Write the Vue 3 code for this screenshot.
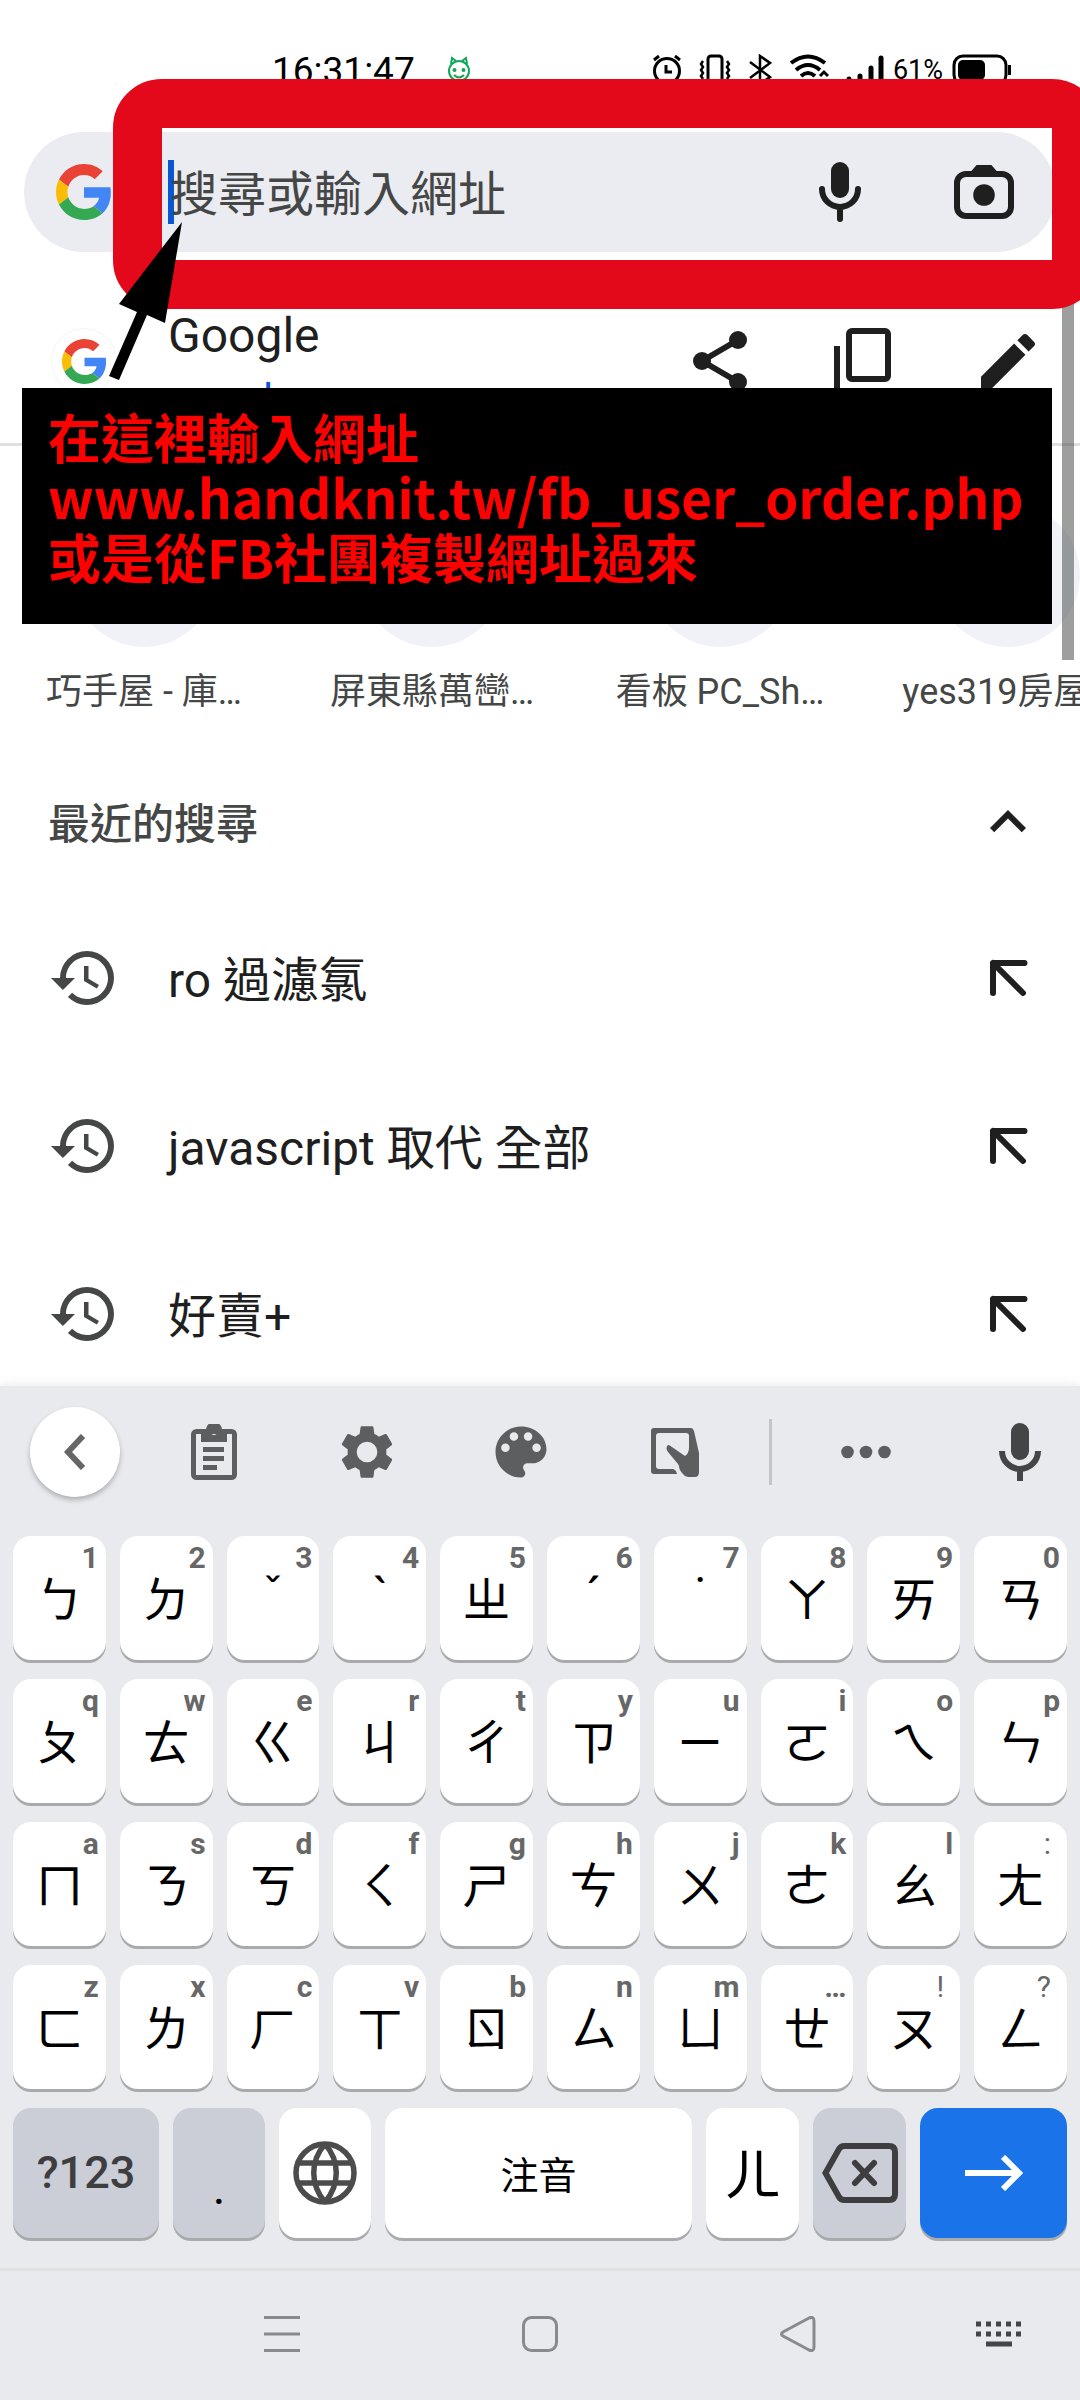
<script setup>
const tiles = ['巧手屋 - 庫…', '屏東縣萬巒…', '看板 PC_Sh…', 'yes319房屋…']

const searches = ['ro 過濾氯', 'javascript 取代 全部', '好賣+']

const keyRows = [
  [['ㄅ', '1'], ['ㄉ', '2'], ['ˇ', '3'], ['ˋ', '4'], ['ㄓ', '5'], ['ˊ', '6'], ['˙', '7'], ['ㄚ', '8'], ['ㄞ', '9'], ['ㄢ', '0']],
  [['ㄆ', 'q'], ['ㄊ', 'w'], ['ㄍ', 'e'], ['ㄐ', 'r'], ['ㄔ', 't'], ['ㄗ', 'y'], ['ㄧ', 'u'], ['ㄛ', 'i'], ['ㄟ', 'o'], ['ㄣ', 'p']],
  [['ㄇ', 'a'], ['ㄋ', 's'], ['ㄎ', 'd'], ['ㄑ', 'f'], ['ㄕ', 'g'], ['ㄘ', 'h'], ['ㄨ', 'j'], ['ㄜ', 'k'], ['ㄠ', 'l'], ['ㄤ', ':']],
  [['ㄈ', 'z'], ['ㄌ', 'x'], ['ㄏ', 'c'], ['ㄒ', 'v'], ['ㄖ', 'b'], ['ㄙ', 'n'], ['ㄩ', 'm'], ['ㄝ', '…'], ['ㄡ', '!'], ['ㄥ', '?']],
]

const isPunctuation = (hint) => [':', '!', '?'].includes(hint)
const isTone = (glyph) => ['ˇ', 'ˋ', 'ˊ', '˙'].includes(glyph)
</script>

<template>
  <div class="screen">
    <header class="status">
      <span class="clock">16:31:47</span>
      <svg class="face" width="24" height="28" viewBox="0 0 24 28" fill="none" stroke="#10a858" stroke-width="2">
        <circle cx="12" cy="15" r="10" />
        <path d="M4 8l1-6 4 3M20 8l-1-6-4 3M7 19q5 5 10 0" />
        <circle cx="7.500" cy="14" r="1" fill="#10a858" /><circle cx="16.500" cy="14" r="1" fill="#10a858" />
      </svg>
      <div class="indicators">
        <svg width="30" height="32" viewBox="0 0 30 32" fill="none" stroke="#000" stroke-width="3">
          <circle cx="15" cy="17" r="12.500" /><path d="M14 11v7h6M2 6l5-4M28 6l-5-4" />
        </svg>
        <svg width="32" height="32" viewBox="0 0 32 32" fill="none" stroke="#000" stroke-width="3">
          <rect x="9" y="2" width="14" height="28" rx="3" />
          <path d="M4 7l-2 3 2 3-2 3 2 3-2 3 2 3M28 7l2 3-2 3 2 3-2 3 2 3-2 3" stroke-width="2.500" />
        </svg>
        <svg width="24" height="32" viewBox="0 0 24 32" fill="none" stroke="#000" stroke-width="2.500">
          <path d="M2 8l20 15-10 7V2l10 7L2 24" />
        </svg>
        <svg width="40" height="32" viewBox="0 0 40 32" fill="none" stroke="#000" stroke-width="4">
          <path d="M2 9q17-13 34 0M7 16q12-10 24 0M12 22q7-6 14 0" />
          <path d="M31 22l4-4 4 4M31 27l4 4 4-4" stroke-width="3" />
        </svg>
        <svg width="38" height="32" viewBox="0 0 38 32" stroke="#000" stroke-width="5" stroke-linecap="round">
          <path d="M3 25v2M14 22v5M25 14v13M35 4v23" />
        </svg>
        <span class="percent">61%</span>
        <svg width="60" height="32" viewBox="0 0 60 32" fill="none" stroke="#000" stroke-width="3">
          <rect x="2" y="2" width="52" height="28" rx="9" />
          <rect x="6" y="6" width="27" height="20" rx="5" fill="#000" stroke="none" />
          <path d="M57.500 11v10" />
        </svg>
      </div>
    </header>

    <main>
      <form class="omnibox" @submit.prevent>
        <svg class="logo" width="56" height="56" viewBox="0 0 48 48">
          <path fill="#EA4335" d="M24 9.500c3.540 0 6.710 1.220 9.210 3.600l6.850-6.850C35.900 2.380 30.470 0 24 0 14.620 0 6.510 5.380 2.560 13.220l7.980 6.190C12.430 13.720 17.740 9.500 24 9.500z" />
          <path fill="#4285F4" d="M46.980 24.550c0-1.570-.15-3.090-.38-4.550H24v9.020h12.940c-.58 2.960-2.260 5.480-4.780 7.180l7.730 6c4.510-4.180 7.090-10.360 7.090-17.650z" />
          <path fill="#FBBC05" d="M10.530 28.590c-.48-1.450-.76-2.990-.76-4.590s.27-3.140.76-4.590l-7.980-6.190C.92 16.460 0 20.120 0 24c0 3.880.92 7.540 2.560 10.780l7.970-6.190z" />
          <path fill="#34A853" d="M24 48c6.480 0 11.930-2.130 15.890-5.810l-7.730-6c-2.150 1.450-4.920 2.300-8.160 2.300-6.260 0-11.570-4.220-13.470-9.910l-7.980 6.190C6.510 42.620 14.620 48 24 48z" />
        </svg>
        <div class="field">
          <span class="caret"></span>
          <input type="text" placeholder="搜尋或輸入網址" aria-label="搜尋或輸入網址" />
        </div>
        <button type="button" class="icon" aria-label="語音搜尋">
          <svg viewBox="0 0 24 24" fill="none" stroke="#1f1f1f" stroke-width="2" stroke-linecap="round">
            <rect x="9" y="2" width="6" height="12" rx="3" fill="#1f1f1f" stroke="none" />
            <path d="M6 11a6 6 0 0 0 12 0M12 17.500V21" />
          </svg>
        </button>
        <button type="button" class="icon" aria-label="相機">
          <svg viewBox="0 0 24 24">
            <rect x="3" y="6" width="18" height="14" rx="3" fill="none" stroke="#1f1f1f" stroke-width="2" />
            <path d="M7.400 5.500L9.500 3h5l2.100 2.500z" fill="#1f1f1f" /><circle cx="12" cy="13" r="3.600" fill="#1f1f1f" />
          </svg>
        </button>
      </form>

      <section class="match">
        <span class="favicon">
          <svg width="45" height="45" viewBox="0 0 48 48">
            <path fill="#EA4335" d="M24 9.500c3.540 0 6.710 1.220 9.210 3.600l6.850-6.850C35.900 2.380 30.470 0 24 0 14.620 0 6.510 5.380 2.560 13.220l7.980 6.190C12.430 13.720 17.740 9.500 24 9.500z" />
            <path fill="#4285F4" d="M46.980 24.550c0-1.570-.15-3.090-.38-4.550H24v9.020h12.940c-.58 2.960-2.260 5.480-4.780 7.180l7.730 6c4.510-4.180 7.090-10.360 7.090-17.650z" />
            <path fill="#FBBC05" d="M10.530 28.590c-.48-1.450-.76-2.990-.76-4.590s.27-3.140.76-4.590l-7.980-6.190C.92 16.460 0 20.120 0 24c0 3.880.92 7.540 2.560 10.780l7.970-6.190z" />
            <path fill="#34A853" d="M24 48c6.480 0 11.930-2.130 15.890-5.810l-7.730-6c-2.150 1.450-4.920 2.300-8.160 2.300-6.260 0-11.570-4.220-13.470-9.910l-7.980 6.190C6.510 42.620 14.620 48 24 48z" />
          </svg>
        </span>
        <div class="match-text">
          <span class="match-title">Google</span>
          <a class="match-url" href="#">google.com</a>
        </div>
        <button type="button" class="icon" aria-label="分享">
          <svg viewBox="0 0 24 24" fill="#1f1f1f" stroke="#1f1f1f">
            <path d="M6 12l12-7M6 12l12 7" fill="none" stroke-width="2" />
            <g stroke="none"><circle cx="6" cy="12" r="3" /><circle cx="18" cy="5" r="3" /><circle cx="18" cy="19" r="3" /></g>
          </svg>
        </button>
        <button type="button" class="icon" aria-label="複製">
          <svg viewBox="0 0 24 24" fill="none" stroke="#1f1f1f" stroke-width="2">
            <rect x="7" y="2" width="13" height="16" rx="1" /><path d="M3 7v15h13" />
          </svg>
        </button>
        <button type="button" class="icon" aria-label="編輯">
          <svg viewBox="0 0 24 24" fill="#1f1f1f">
            <path d="M3 17.250V21h3.750L17.810 9.940l-3.750-3.750L3 17.250zM20.710 7.040c.39-.39.39-1.020 0-1.410l-2.340-2.340c-.39-.39-1.020-.39-1.410 0l-1.830 1.830 3.750 3.750 1.830-1.830z" />
          </svg>
        </button>
      </section>

      <section class="tiles">
        <a v-for="tile in tiles" :key="tile" class="tile" href="#">
          <span class="disc"></span>
          <span class="tile-name">{{ tile }}</span>
        </a>
      </section>

      <section class="recent">
        <div class="recent-head">
          <h2>最近的搜尋</h2>
          <button type="button" class="icon" aria-label="收合">
            <svg viewBox="0 0 24 24" fill="#1f1f1f"><path d="M12 8l-6 6 1.410 1.410L12 10.830l4.590 4.580L18 14z" /></svg>
          </button>
        </div>
        <ul>
          <li v-for="search in searches" :key="search">
            <svg class="history" viewBox="0 0 24 24" fill="#444746">
              <path d="M13 3a9 9 0 0 0-9 9H1l3.890 3.890.07.14L9 12H6c0-3.870 3.130-7 7-7s7 3.130 7 7-3.130 7-7 7c-1.930 0-3.680-.79-4.940-2.060l-1.420 1.420A8.950 8.950 0 0 0 13 21a9 9 0 0 0 0-18zm-1 5v5l4.280 2.540.72-1.210-3.500-2.080V8H12z" />
            </svg>
            <span class="query">{{ search }}</span>
            <button type="button" class="icon" :aria-label="'填入 ' + search">
              <svg viewBox="0 0 24 24" fill="none" stroke="#1f1f1f" stroke-width="2" stroke-linecap="round" stroke-linejoin="round">
                <path d="M7 17V7h10.500M7 7l10 10" />
              </svg>
            </button>
          </li>
        </ul>
      </section>
    </main>

    <section class="keyboard">
      <div class="tools">
        <button type="button" class="back" aria-label="返回">
          <svg width="22" height="36" viewBox="0 0 22 36" fill="none" stroke="#666" stroke-width="6"><path d="M19 2L4 18l15 16" /></svg>
        </button>
        <button type="button" aria-label="剪貼簿">
          <svg width="46" height="56" viewBox="0 0 46 56" fill="#5d5e60">
            <rect x="2.500" y="7.500" width="41" height="46" rx="3" fill="none" stroke="#5d5e60" stroke-width="5" />
            <path fill-rule="evenodd" d="M10 6h5a8 8 0 0 1 16 0h5v12H10zM23 5a3 3 0 1 0 0 6 3 3 0 0 0 0-6z" />
            <path d="M12 23h21v5H12zM12 32h21v5H12zM12 41h14v5H12z" />
          </svg>
        </button>
        <button type="button" aria-label="設定">
          <svg width="62" height="62" viewBox="0 0 24 24" fill="#5d5e60">
            <path d="M19.430 12.980c.04-.32.07-.64.07-.98s-.03-.66-.07-.98l2.110-1.650c.19-.15.24-.42.12-.64l-2-3.460c-.12-.22-.39-.3-.61-.22l-2.490 1c-.52-.4-1.080-.73-1.690-.98l-.38-2.650C14.460 2.180 14.250 2 14 2h-4c-.25 0-.46.18-.49.42l-.38 2.650c-.61.25-1.170.59-1.690.98l-2.490-1c-.23-.09-.49 0-.61.22l-2 3.460c-.13.22-.07.49.12.64l2.110 1.650c-.04.32-.07.65-.07.98s.03.66.07.98l-2.110 1.650c-.19.15-.24.42-.12.64l2 3.460c.12.22.39.3.61.22l2.490-1c.52.4 1.080.73 1.690.98l.38 2.650c.03.24.24.42.49.42h4c.25 0 .46-.18.49-.42l.38-2.650c.61-.25 1.170-.59 1.690-.98l2.490 1c.23.09.49 0 .61-.22l2-3.460c.12-.22.07-.49-.12-.64l-2.110-1.650zM12 16a4 4 0 1 1 0-8 4 4 0 0 1 0 8z" />
          </svg>
        </button>
        <button type="button" aria-label="主題">
          <svg width="68" height="68" viewBox="0 0 24 24" fill="#5d5e60">
            <path d="M12 3c-4.970 0-9 4.030-9 9s4.030 9 9 9c.83 0 1.500-.67 1.500-1.500 0-.39-.15-.74-.39-1.010-.23-.26-.38-.61-.38-.99 0-.83.67-1.500 1.500-1.500H16c2.760 0 5-2.240 5-5 0-4.420-4.030-8-9-8zm-5.500 9c-.83 0-1.500-.67-1.500-1.500S5.670 9 6.500 9 8 9.670 8 10.500 7.330 12 6.500 12zm3-4C8.670 8 8 7.330 8 6.500S8.670 5 9.500 5s1.500.67 1.500 1.500S10.330 8 9.500 8zm5 0c-.83 0-1.500-.67-1.500-1.500S13.670 5 14.500 5s1.500.67 1.500 1.500S15.330 8 14.500 8zm3 4c-.83 0-1.500-.67-1.500-1.500S16.670 9 17.500 9s1.500.67 1.500 1.500-.67 1.500-1.500 1.500z" />
          </svg>
        </button>
        <button type="button" aria-label="手寫">
          <svg width="48" height="49" viewBox="0 0 48 49" fill="#5d5e60">
            <path d="M3 0h37q2 0 3 3l5 22v19q0 5-4 5h-7q-3 0-5-3-4-4-4-8l-1-2-10-12q-3-4 0-7l1 0 16 11q4-3 4-8V8q0-3-3-3H8Q5 5 5 8v30q0 3 3 3h13q4 0 5 5H3q-3 0-3-3V3q0-3 3-3z" />
          </svg>
        </button>
        <span class="separator"></span>
        <button type="button" aria-label="更多">
          <svg width="50" height="14" viewBox="0 0 50 14" fill="#5d5e60"><circle cx="6.500" cy="7" r="6.300" /><circle cx="25" cy="7" r="6.300" /><circle cx="43.500" cy="7" r="6.300" /></svg>
        </button>
        <button type="button" class="dictate" aria-label="語音輸入">
          <svg width="42" height="58" viewBox="0 0 42 58" fill="none" stroke="#444547" stroke-width="6">
            <rect x="12" y="0" width="18" height="37" rx="9" fill="#444547" stroke="none" />
            <path d="M3 28a18 18 0 0 0 36 0M21 46v12" />
          </svg>
        </button>
      </div>

      <div class="keys">
        <div v-for="(row, i) in keyRows" :key="i" class="key-row">
          <button v-for="[glyph, hint] in row" :key="glyph" type="button" class="key" :class="{ tone: isTone(glyph) }">
            <span class="hint" :class="{ light: isPunctuation(hint) }">{{ hint }}</span>{{ glyph }}
          </button>
        </div>
        <div class="bottom-row">
          <button type="button" class="key grey symbols">?123</button>
          <button type="button" class="key grey period">.</button>
          <button type="button" class="key" aria-label="切換語言">
            <svg width="64" height="64" viewBox="0 0 64 64" fill="none" stroke="#4c4c4c" stroke-width="5.500">
              <circle cx="32" cy="32" r="29" /><path d="M32 3C17 20 17 44 32 61M32 3c15 17 15 41 0 58M6 22h52M6 42h52" />
            </svg>
          </button>
          <button type="button" class="key space">注音</button>
          <button type="button" class="key large">ㄦ</button>
          <button type="button" class="key grey" aria-label="刪除">
            <svg width="76" height="60" viewBox="0 0 76 60" fill="none" stroke="#3e3e40" stroke-width="6" stroke-linecap="round">
              <path d="M22 3h45q6 0 6 6v42q0 6-6 6H22q-3 0-5-3L3.500 30 17 6q2-3 5-3zM33 20l19 20M52 20L33 40" />
            </svg>
          </button>
          <button type="button" class="key go" aria-label="前往">
            <svg width="58" height="36" viewBox="0 0 58 36" fill="none" stroke="#fff" stroke-width="6"><path d="M0 18h54M38 2l16 16-16 16" /></svg>
          </button>
        </div>
      </div>

      <nav class="system">
        <button type="button" aria-label="最近使用">
          <svg width="36" height="36" viewBox="0 0 36 36" stroke="#8a8a8c" stroke-width="3"><path d="M0 1.500h36M0 18h36M0 34.500h36" /></svg>
        </button>
        <button type="button" aria-label="主畫面">
          <svg width="36" height="36" viewBox="0 0 36 36" fill="none" stroke="#8a8a8c" stroke-width="3"><rect x="1.500" y="1.500" width="33" height="33" rx="8" /></svg>
        </button>
        <button type="button" aria-label="上一頁">
          <svg width="36" height="36" viewBox="0 0 36 36" fill="none" stroke="#8a8a8c" stroke-width="3"><path d="M29 2q5-2 5 3v26q0 5-5 3L3 20q-3-2 0-4z" /></svg>
        </button>
        <button type="button" aria-label="切換鍵盤">
          <svg width="46" height="26" viewBox="0 0 46 26" stroke="#444547" stroke-width="5"><path d="M0 3h46M0 13h46" stroke-dasharray="5 5" /><path d="M10 23h26" /></svg>
        </button>
      </nav>
    </section>

    <span class="scrollbar"></span>
    <div class="frame"></div>
    <svg class="pointer" width="74" height="158" viewBox="0 0 74 158">
      <path d="M73 0L56 101 38 93 10 158 0 154 28 90 10 82z" />
    </svg>
    <aside class="note">
      <p>在這裡輸入網址</p>
      <p>www.handknit.tw/fb_user_order.php</p>
      <p>或是從FB社團複製網址過來</p>
    </aside>
  </div>
</template>

<style>
body {
  margin: 0;
  background: #fff;
}
</style>

<style scoped>
.screen {
  position: relative;
  display: flex;
  flex-direction: column;
  min-height: 100vh;
  overflow: hidden;
  background: #fff;
  color: #1f1f1f;
  font-family: Roboto, "Noto Sans CJK TC", sans-serif;
}

button {
  display: flex;
  align-items: center;
  justify-content: center;
  padding: 0;
  border: 0;
  background: none;
  color: inherit;
  font: inherit;
}

svg {
  display: block;
  flex: none;
}

.icon,
.icon svg,
.history {
  flex: none;
  width: 72px;
  height: 72px;
}

.status {
  display: flex;
  align-items: center;
  height: 76px;
  padding: 32px 68px 0 272px;
  color: #000;
}

.clock {
  font-size: 37px;
}

.face {
  margin-left: 32px;
}

.indicators {
  display: flex;
  align-items: center;
  gap: 17px;
  margin-left: auto;
}

.percent {
  margin: 0 -8px;
  font-size: 27px;
}

.omnibox {
  display: flex;
  align-items: center;
  height: 120px;
  margin: 24px 24px 27px;
  padding: 0 36px 0 32px;
  border-radius: 60px;
  background: #ebecf1;
}

.field {
  position: relative;
  flex: 1;
  min-width: 0;
  margin-left: 58px;
}

.field input {
  position: relative;
  box-sizing: border-box;
  width: 100%;
  height: 64px;
  padding: 4px 0 0;
  border: 0;
  outline: 0;
  background: none;
  font: 48px Roboto, "Noto Sans CJK TC", sans-serif;
}

.field input::placeholder {
  color: #444746;
  opacity: 1;
}

.caret {
  position: absolute;
  top: 0;
  left: -2px;
  width: 6px;
  height: 64px;
  background: #0b57d0;
}

.omnibox .icon + .icon,
.match .icon + .icon {
  margin-left: 72px;
}

.match {
  display: flex;
  align-items: center;
  height: 164px;
  padding: 0 36px 0 52px;
  border-bottom: 3px solid #dfdfdf;
}

.favicon {
  display: flex;
  align-items: center;
  justify-content: center;
  width: 64px;
  height: 64px;
  border-radius: 50%;
  box-shadow: 0 0 0 1px #f4f4f4;
}

.match-text {
  display: flex;
  flex: 1;
  flex-direction: column;
  padding-top: 14px;
  margin-left: 52px;
  line-height: 64px;
}

.match-title {
  font-size: 48px;
}

.match-url {
  color: #0b57d0;
  font-size: 42px;
  text-decoration: none;
}

.tiles {
  display: flex;
  padding-top: 57px;
}

.tile {
  display: flex;
  flex: none;
  flex-direction: column;
  align-items: center;
  gap: 21px;
  width: 288px;
  color: #444746;
  font-size: 36px;
  line-height: 48px;
  white-space: nowrap;
  text-decoration: none;
}

.disc {
  width: 144px;
  height: 144px;
  border-radius: 50%;
  background: #f1f2f7;
}

.recent-head,
.recent li {
  display: flex;
  align-items: center;
  justify-content: space-between;
  padding: 0 36px 0 48px;
}

.recent-head {
  height: 140px;
  margin-top: 36px;
  padding-bottom: 2px;
}

.recent h2 {
  margin: 0;
  padding-bottom: 4px;
  color: #444746;
  font-size: 42px;
  font-weight: 500;
}

.recent ul {
  margin: 0;
  padding: 0;
  list-style: none;
}

.recent li {
  height: 168px;
}

.query {
  flex: 1;
  margin-left: 48px;
  padding-bottom: 4px;
  font-size: 48px;
}

.keyboard {
  position: relative;
  display: flex;
  flex: 1;
  flex-direction: column;
  margin-top: -12px;
  background: #e8eaee;
  box-shadow: 0 0 12px rgba(0, 0, 0, 0.1);
}

.tools {
  display: grid;
  grid-template-columns: 137px repeat(4, 1fr) 38px 1fr 137px;
  align-items: center;
  height: 132px;
}

.back {
  width: 90px;
  height: 90px;
  margin-left: 30px;
  border-radius: 50%;
  background: #fff;
  box-shadow: 0 3px 5px rgba(0, 0, 0, 0.25);
}

.separator {
  justify-self: center;
  width: 3px;
  height: 66px;
  background: #c4c5c9;
}

.dictate {
  padding-left: 17px;
}

.keys {
  display: flex;
  flex-direction: column;
  gap: 19px;
  padding: 18px 13px 30px;
}

.key-row {
  display: grid;
  grid-template-columns: repeat(10, 1fr);
  gap: 14px;
}

.bottom-row {
  display: grid;
  grid-template-columns: 146fr 92fr 92fr 307fr 93fr 93fr 147fr;
  gap: 14px;
}

.key {
  position: relative;
  min-width: 0;
  height: 124px;
  border-radius: 18px;
  background: #fff;
  box-shadow: 0 3px 0 #a9aaac;
  color: #000;
  font-family: "Noto Sans CJK TC", sans-serif;
  font-size: 48px;
  line-height: 60px;
}

.key-row .key,
.bottom-row .large {
  padding-bottom: 4px;
}

.key-row .tone {
  font-family: Roboto, "Noto Sans", sans-serif;
}

.bottom-row .key {
  height: 130px;
}

.hint {
  position: absolute;
  top: 4px;
  right: 7px;
  color: #676767;
  font-family: Roboto, sans-serif;
  font-size: 30px;
  font-weight: 700;
  line-height: 36px;
}

.hint.light {
  right: 16px;
  font-weight: 400;
}

.bottom-row .grey {
  background: #cbced7;
}

.bottom-row .symbols {
  color: #3e3e40;
  font-family: Roboto, sans-serif;
  font-size: 45px;
  font-weight: 500;
}

.bottom-row .period {
  padding-top: 30px;
  font-family: Roboto, sans-serif;
}

.bottom-row .space {
  font-size: 38px;
}

.bottom-row .large {
  font-size: 56px;
}

.bottom-row .go {
  background: #1a73e8;
}

.system {
  display: grid;
  flex: 1;
  grid-template-columns: 1fr 1fr 1fr 144px;
  align-items: center;
  min-height: 124px;
  padding: 0 9px 4px 153px;
  border-top: 3px solid #e0e0e1;
}

.scrollbar {
  position: absolute;
  top: 268px;
  right: 6px;
  width: 12px;
  height: 392px;
  background: rgba(60, 64, 63, 0.5);
}

.frame {
  position: absolute;
  top: 79px;
  right: -21px;
  left: 113px;
  height: 132px;
  border: 49px solid #e3081a;
  border-radius: 49px;
}

.pointer {
  position: absolute;
  top: 222px;
  left: 109px;
}

.note {
  position: absolute;
  top: 388px;
  right: 28px;
  left: 22px;
  height: 218px;
  padding: 18px 0 0 26px;
  background: #000;
  color: #f00;
  font-family: "Noto Sans CJK TC", sans-serif;
  font-size: 53px;
  font-weight: 700;
  line-height: 60px;
  white-space: nowrap;
}

.note p {
  margin: 0;
}
</style>
